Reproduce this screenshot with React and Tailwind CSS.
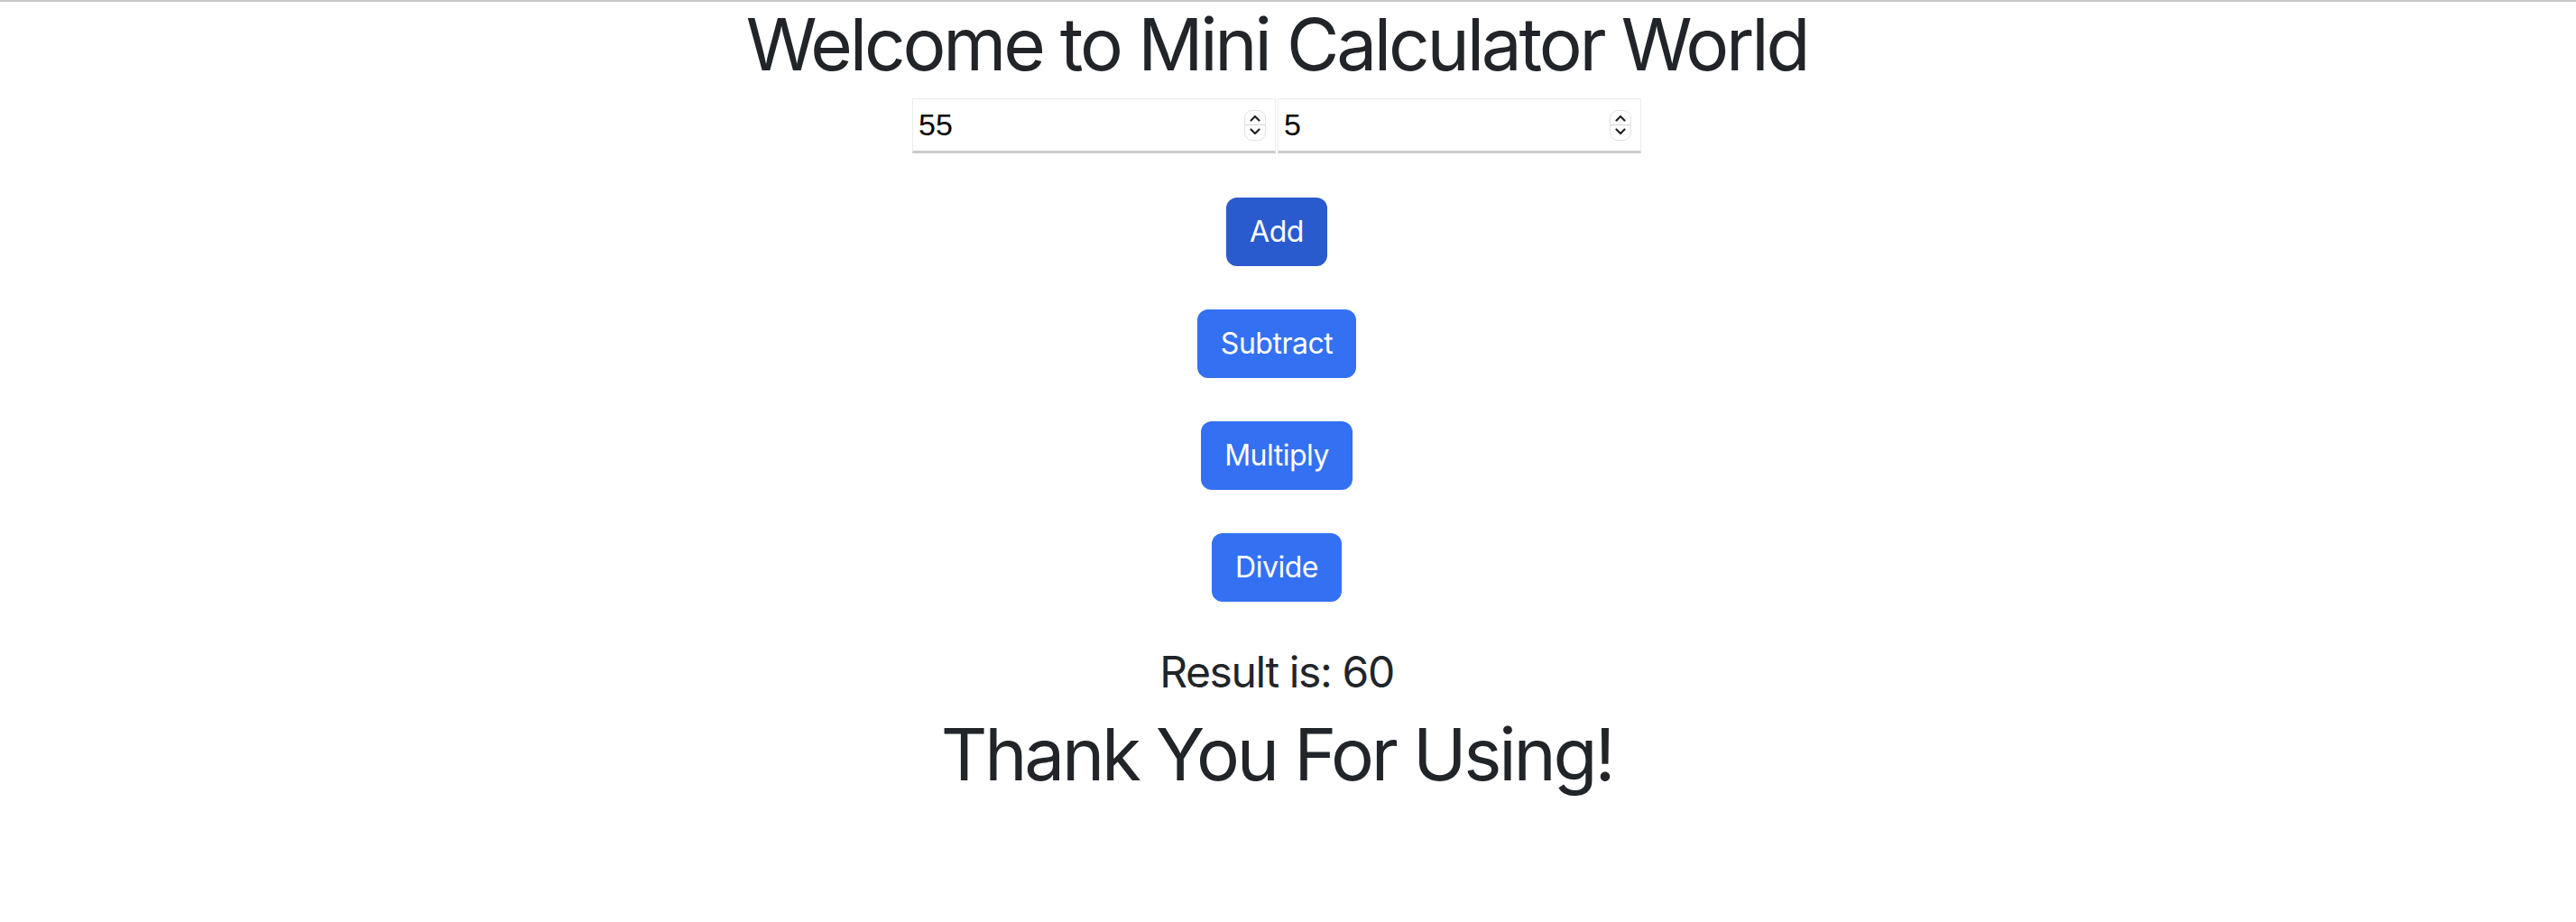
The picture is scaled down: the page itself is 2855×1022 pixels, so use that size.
import React, { useState } from 'react';

const font = { fontFamily: 'Inter, "Noto Sans", sans-serif' };

function Spinner() {
  return (
    <div className="flex h-[34px] w-[24px] shrink-0 flex-col items-center justify-center rounded-[9px] border border-[#e2e2e2] bg-white">
      <svg width="16" height="14" viewBox="0 0 16 14" className="text-[#222]">
        <path d="M3.5 9.5 L8 5 L12.5 9.5" fill="none" stroke="currentColor" strokeWidth="2.2" strokeLinecap="round" strokeLinejoin="round" />
      </svg>
      <div className="h-px w-full bg-[#d4d4d4]" />
      <svg width="16" height="14" viewBox="0 0 16 14" className="text-[#222]">
        <path d="M3.5 4.5 L8 9 L12.5 4.5" fill="none" stroke="currentColor" strokeWidth="2.2" strokeLinecap="round" strokeLinejoin="round" />
      </svg>
    </div>
  );
}

function NumberBox({ value }) {
  return (
    <div className="flex h-[61px] w-[403px] items-center border border-b-[3px] border-[#ececec] border-b-[#cbcbcb] bg-white pl-[6px] pr-[10px]">
      <span className="flex-1 text-[34px] text-black" style={{ fontFamily: '"Liberation Sans", Arial, sans-serif' }}>
        {value}
      </span>
      <Spinner />
    </div>
  );
}

function Btn({ children, active }) {
  return (
    <button
      className={`h-[76px] rounded-[12px] border-2 px-[24px] text-[32px] leading-[48px] tracking-[-0.5px] text-white ${
        active ? 'border-[#2a5bce] bg-[#2a5bce]' : 'border-[#3470f2] bg-[#3470f2]'
      }`}
    >
      {children}
    </button>
  );
}

export default function App() {
  const [a] = useState(55);
  const [b] = useState(5);

  return (
    <div className="min-h-[1022px] border-t-2 border-[#c9c9c9] bg-white pr-[25px]" style={font}>
      <div className="flex flex-col items-center">
        <h1 className="text-[80px] leading-[94px] tracking-[-3.2px] text-[#212529]">Welcome to Mini Calculator World</h1>
        <div className="mt-[13px] flex gap-[2px]">
          <NumberBox value={a} />
          <NumberBox value={b} />
        </div>
        <div className="mt-[49px] flex flex-col items-center gap-[48px]">
          <Btn active>Add</Btn>
          <Btn>Subtract</Btn>
          <Btn>Multiply</Btn>
          <Btn>Divide</Btn>
        </div>
        <h4 className="mt-[49px] text-[48px] leading-[58px] tracking-[-1.4px] text-[#212529]">Result is: {a + b}</h4>
        <h1 className="mt-[14px] text-[80px] leading-[96px] tracking-[-3.2px] text-[#212529]">Thank You For Using!</h1>
      </div>
    </div>
  );
}
